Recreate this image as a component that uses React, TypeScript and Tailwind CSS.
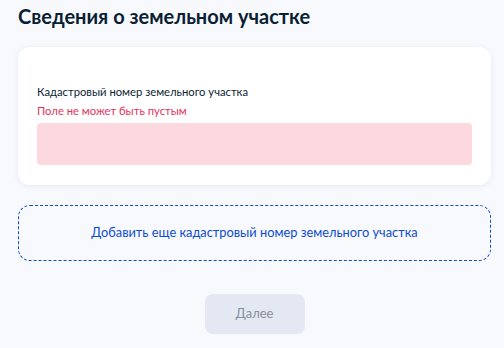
export default function App() {
  return (
    <div className="min-h-[348px] w-[504px] bg-[#f7f9fd] pl-[18px] pr-[13px] font-['Lato','Noto_Sans',sans-serif]">
      <h1 className="pt-[3px] text-[20px] font-bold leading-[26px] text-[#0b1f33]">
        Сведения о земельном участке
      </h1>
      <div className="mt-[18px] rounded-[12px] bg-white px-[19px] pt-[37px] pb-[20px] shadow-[0_1px_6px_rgba(30,60,120,0.08)]">
        <div className="text-[11.25px] leading-[16px] text-[#0b1f33]">Кадастровый номер земельного участка</div>
        <div className="mt-[3px] text-[11.25px] leading-[16px] text-[#e3325a]">Поле не может быть пустым</div>
        <div className="mt-[4px] h-[42px] rounded-[4px] bg-[#fcd9de]" />
      </div>
      <div className="mt-[20px] flex h-[56px] items-center justify-center rounded-[12px] border border-dashed border-[#0d4cd3] text-[12.8px] text-[#0d4cd3]">
        Добавить еще кадастровый номер земельного участка
      </div>
      <div className="mt-[33px] flex justify-center">
        <button className="h-[40px] w-[100px] rounded-[8px] bg-[#e4e8f2] text-[13px] text-[#86909c]">
          Далее
        </button>
      </div>
    </div>
  );
}
